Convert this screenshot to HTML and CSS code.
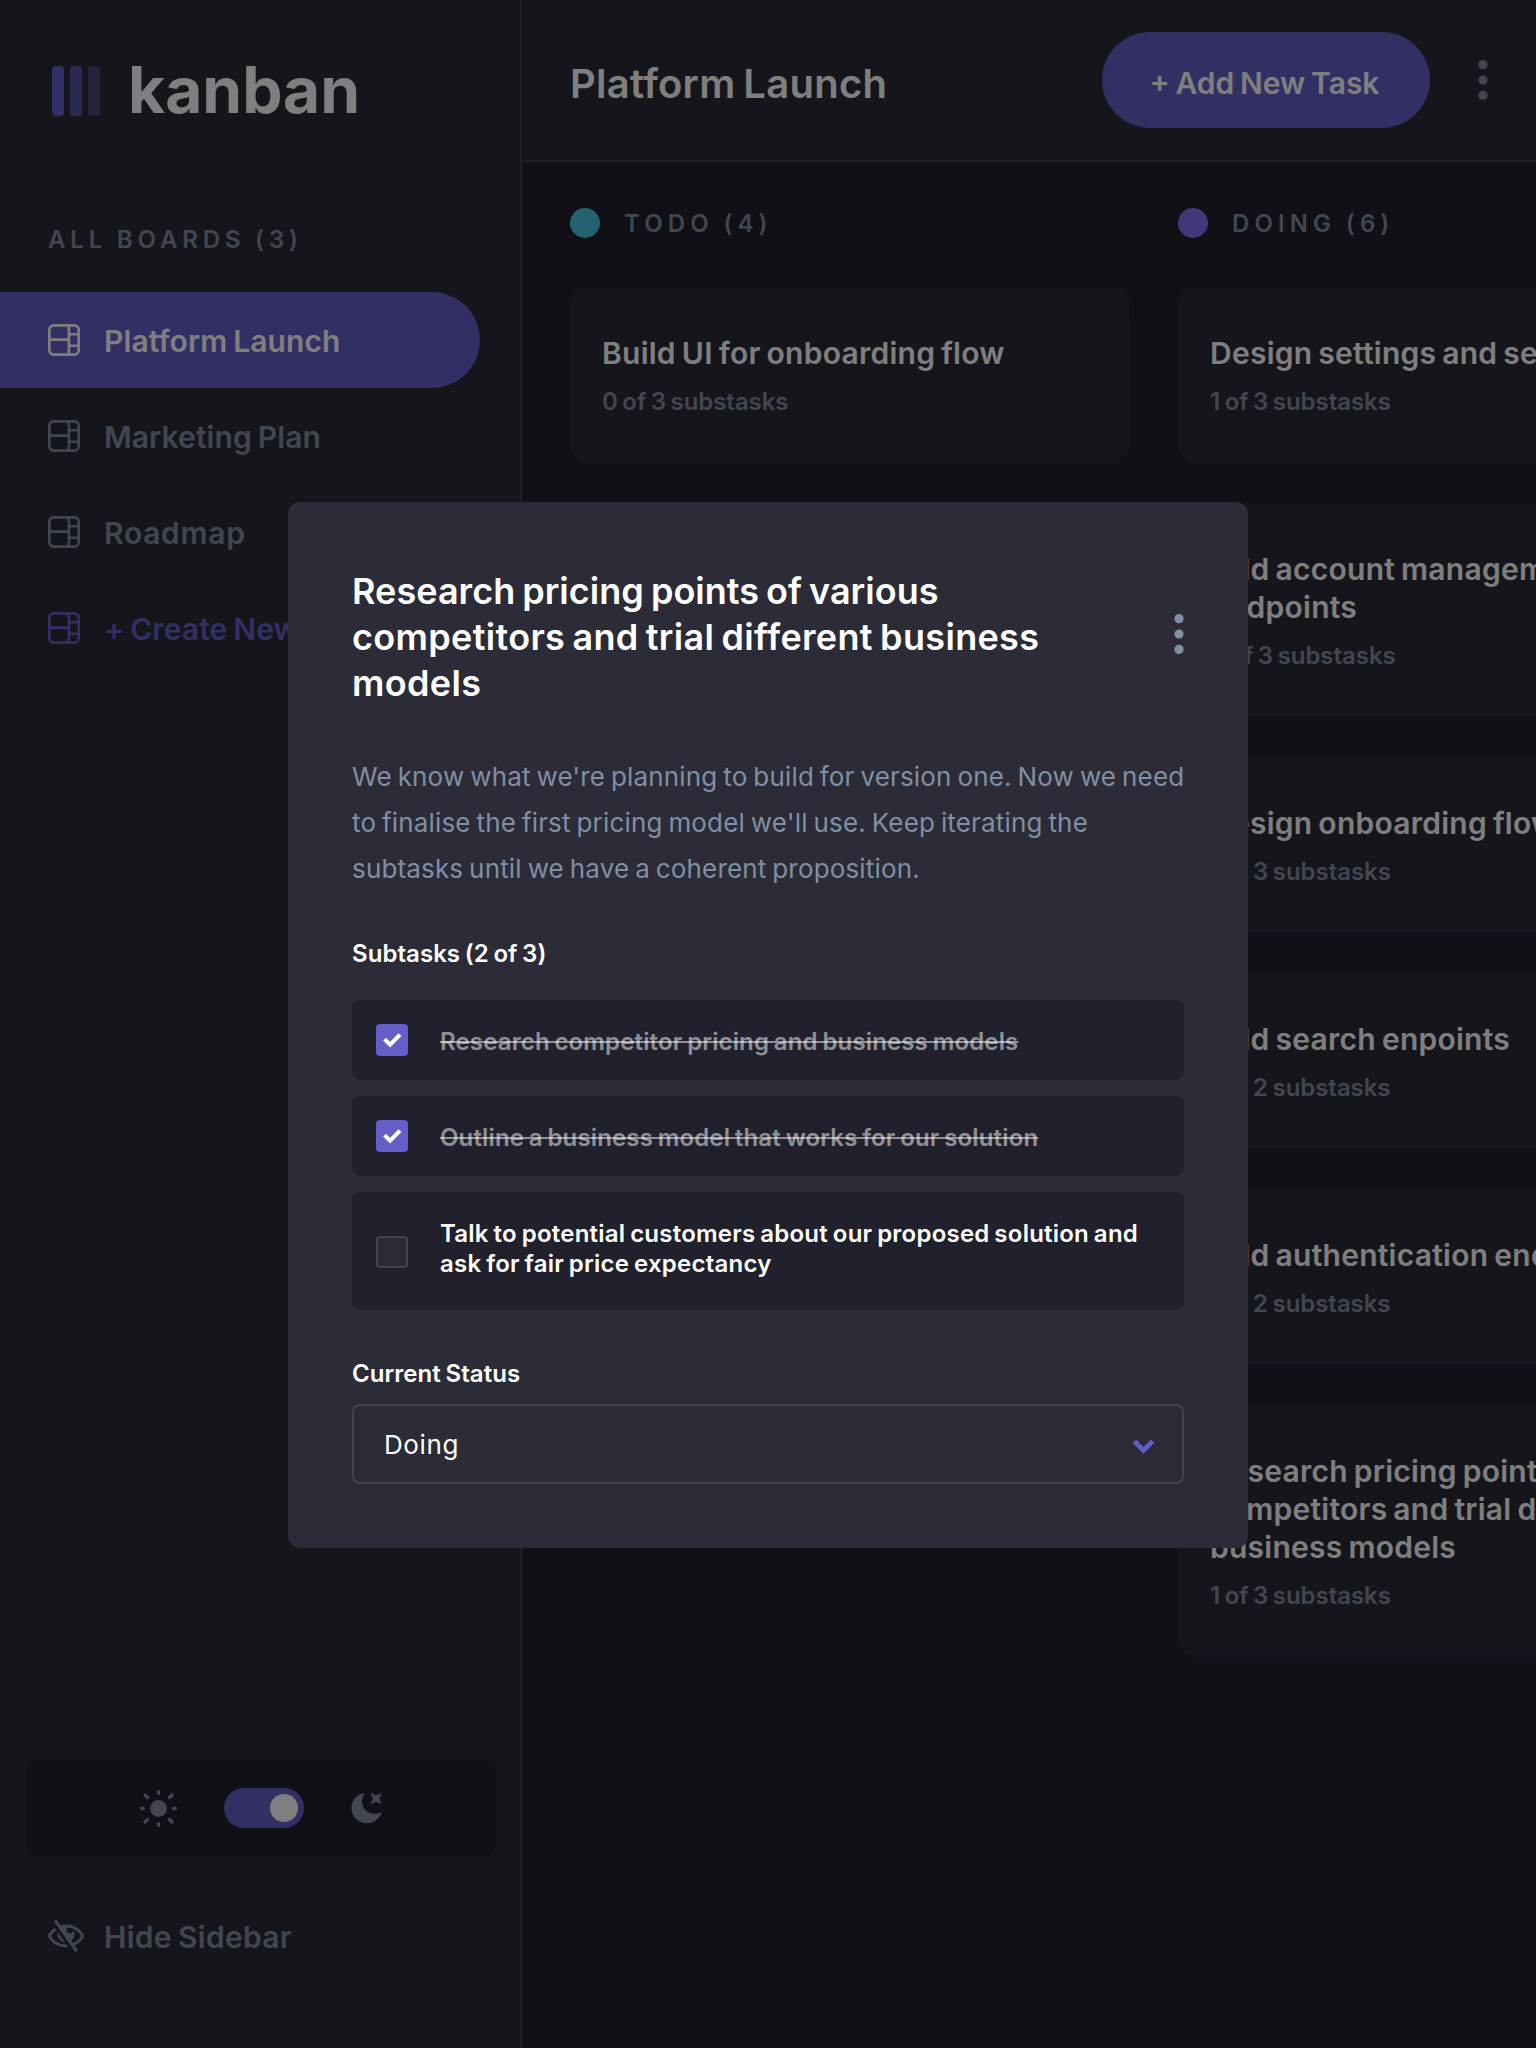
FILE: index.html
```html
<!DOCTYPE html>
<html lang="en">
<head>
<meta charset="utf-8">
<title>Kanban</title>
<link rel="stylesheet" href="styles.css">
</head>
<body>
<svg width="0" height="0" class="defs">
  <symbol id="board" viewBox="0 0 16 16"><path d="M0 2.889A2.889 2.889 0 0 1 2.889 0H13.11A2.889 2.889 0 0 1 16 2.889V13.11A2.888 2.888 0 0 1 13.111 16H2.89A2.889 2.889 0 0 1 0 13.111V2.89Zm1.333 5.555v4.667c0 .859.697 1.556 1.556 1.556h6.889V8.444H1.333Zm8.445-1.333V1.333h-6.89A1.556 1.556 0 0 0 1.334 2.89V7.11h8.445Zm4.889-1.333H11.11v4.444h3.556V5.778Zm0 5.778H11.11v3.11h2a1.556 1.556 0 0 0 1.556-1.555v-1.555Zm0-7.112V2.89a1.555 1.555 0 0 0-1.556-1.556h-2v3.111h3.556Z"/></symbol>
  <symbol id="dots" viewBox="0 0 5 20"><circle cx="2.5" cy="2.308" r="2.308"/><circle cx="2.5" cy="10" r="2.308"/><circle cx="2.5" cy="17.692" r="2.308"/></symbol>
  <symbol id="check" viewBox="0 0 10 8"><path d="m1.276 3.066 2.756 2.756 5-5" fill="none" stroke="#fff" stroke-width="2"/></symbol>
</svg>
<div class="app">
  <aside class="sidebar">
    <div class="logo"><i></i><i></i><i></i><b>kanban</b></div>
    <h2 class="eyebrow"><span>ALL BOARDS (3)</span></h2>
    <nav>
      <a class="item active"><svg class="i16"><use href="#board"/></svg><span>Platform Launch</span></a>
      <a class="item"><svg class="i16"><use href="#board"/></svg><span>Marketing Plan</span></a>
      <a class="item roadmap"><svg class="i16"><use href="#board"/></svg><span>Roadmap</span></a>
      <a class="item create"><svg class="i16"><use href="#board"/></svg><span>+ Create New Board</span></a>
    </nav>
    <div class="theme">
      <svg class="sun" viewBox="0 0 18.334 18.334"><path d="M9.167 15.833a.833.833 0 0 1 .833.834v.833a.833.833 0 0 1-1.667 0v-.833a.833.833 0 0 1 .834-.834ZM3.75 13.75a.833.833 0 0 1 .59 1.422l-1.25 1.25a.833.833 0 0 1-1.18-1.178l1.25-1.25a.833.833 0 0 1 .59-.244Zm10.833 0c.221 0 .433.088.59.244l1.25 1.25a.833.833 0 0 1-1.179 1.178l-1.25-1.25a.833.833 0 0 1 .59-1.422ZM9.167 5a4.167 4.167 0 1 1 0 8.334 4.167 4.167 0 0 1 0-8.334Zm-7.5 3.333a.833.833 0 0 1 0 1.667H.833a.833.833 0 1 1 0-1.667h.834Zm15.833 0a.833.833 0 0 1 0 1.667h-.833a.833.833 0 0 1 0-1.667h.833Zm-1.667-6.666a.833.833 0 0 1 .59 1.422l-1.25 1.25a.833.833 0 1 1-1.179-1.178l1.25-1.25a.833.833 0 0 1 .59-.244Zm-13.333 0c.221 0 .433.088.59.244l1.25 1.25a.833.833 0 0 1-1.18 1.178L1.91 3.09a.833.833 0 0 1 .59-1.422ZM9.167 0A.833.833 0 0 1 10 .833v.834a.833.833 0 1 1-1.667 0V.833A.833.833 0 0 1 9.167 0Z"/></svg>
      <div class="toggle"></div>
      <svg class="moon" viewBox="0 0 16 16"><path d="M6.474.682c.434-.11.718.406.481.78A6.067 6.067 0 0 0 6.01 4.72c0 3.418 2.827 6.187 6.314 6.187.89.002 1.77-.182 2.584-.54.408-.18.894.165.724.57-1.16 2.775-3.944 4.73-7.194 4.73-4.292 0-7.771-3.41-7.771-7.615 0-3.541 2.466-6.518 5.807-7.37Zm8.433.07c.442-.294.969.232.674.674l-.525.787a1.943 1.943 0 0 0 0 2.157l.525.788c.295.441-.232.968-.674.673l-.787-.525a1.943 1.943 0 0 0-2.157 0l-.786.525c-.442.295-.97-.232-.675-.673l.525-.788a1.943 1.943 0 0 0 0-2.157l-.525-.787c-.295-.442.232-.968.674-.673l.787.525a1.943 1.943 0 0 0 2.157 0Z"/></svg>
    </div>
    <a class="item hide"><svg class="eye" viewBox="0 0 18 16"><path d="M8.522 11.223a4.252 4.252 0 0 1-3.654-5.22l3.654 5.22ZM9 12.25A8.685 8.685 0 0 1 1.5 8a8.612 8.612 0 0 1 2.76-2.864l-.86-1.23A10.112 10.112 0 0 0 .208 7.238a1.5 1.5 0 0 0 0 1.524A10.187 10.187 0 0 0 9 13.75c.414 0 .828-.025 1.239-.074l-1-1.43A8.88 8.88 0 0 1 9 12.25Zm8.792-3.488a10.14 10.14 0 0 1-4.486 4.046l1.504 2.148a.375.375 0 0 1-.092.523l-.648.453a.375.375 0 0 1-.523-.092L3.19 1.044A.375.375 0 0 1 3.282.52L3.93.068a.375.375 0 0 1 .523.092l1.735 2.479A9.676 9.676 0 0 1 9 2.25a10.187 10.187 0 0 1 8.792 4.988 1.5 1.5 0 0 1 0 1.524ZM16.5 8a8.674 8.674 0 0 0-6.755-4.219A1.75 1.75 0 1 0 12.75 5v-.001a4.25 4.25 0 0 1-1.154 5.366l.834 1.192A8.641 8.641 0 0 0 16.5 8Z"/></svg><span>Hide Sidebar</span></a>
  </aside>
  <div class="main">
    <header class="topbar">
      <h1>Platform Launch</h1>
      <button class="add">+ Add New Task</button>
      <svg class="dots"><use href="#dots"/></svg>
    </header>
    <main class="columns">
      <section class="column">
        <h3 class="eyebrow"><i class="dot todo"></i><span>TODO (4)</span></h3>
        <article class="card"><h4>Build UI for onboarding flow</h4><p>0 of 3 substasks</p></article>
      </section>
      <section class="column">
        <h3 class="eyebrow"><i class="dot doing"></i><span>DOING (6)</span></h3>
        <article class="card"><h4>Design settings and search pages</h4><p>1 of 3 substasks</p></article>
        <article class="card"><h4>Add account management<br>endpoints</h4><p>2 of 3 substasks</p></article>
        <article class="card"><h4>Design onboarding flow</h4><p>1 of 3 substasks</p></article>
        <article class="card"><h4>Add search enpoints</h4><p>1 of 2 substasks</p></article>
        <article class="card"><h4>Add authentication endpoints</h4><p>1 of 2 substasks</p></article>
        <article class="card"><h4>Research pricing points of various<br>competitors and trial different<br>business models</h4><p>1 of 3 substasks</p></article>
      </section>
    </main>
  </div>
</div>
<div class="overlay">
  <div class="modal">
    <div class="modal-head">
      <h2>Research pricing points of various<br><span class="wide">competitors and trial different business<br>models</span></h2>
      <svg class="dots"><use href="#dots"/></svg>
    </div>
    <p class="desc">We know what we're planning to build for version one. Now we need<br>to finalise the first pricing model we'll use. Keep iterating the<br>subtasks until we have a coherent proposition.</p>
    <h5 class="label">Subtasks (2 of 3)</h5>
    <ul class="subtasks">
      <li class="done"><i class="box"><svg><use href="#check"/></svg></i><div>Research competitor pricing and business models</div></li>
      <li class="done"><i class="box"><svg><use href="#check"/></svg></i><div>Outline a business model that works for our solution</div></li>
      <li class="two"><i class="box"></i><div>Talk to potential customers about our proposed solution and<br>ask for fair price expectancy</div></li>
    </ul>
    <h5 class="label">Current Status</h5>
    <div class="select"><span>Doing</span><svg viewBox="0 0 10 7"><path d="m1 1 4 4 4-4"/></svg></div>
  </div>
</div>
</body>
</html>
```
FILE: styles.css
```css
* { box-sizing: border-box; margin: 0; padding: 0; }
body {
  width: 1536px; height: 2048px; overflow: hidden; position: relative;
  background: #20212c; color: #fff;
  font-family: Inter, "Open Sans", sans-serif; font-weight: 600;
}
h1, h2, h3, h4, h5, button { font: inherit; font-weight: 600; }
h1, h2, h3, h4, h5, p, li, a, button { white-space: nowrap; word-spacing: -.06em; }
i { display: block; font-style: normal; }
svg { display: block; fill: currentColor; flex: none; }
.defs { position: absolute; }
.app { display: flex; width: 1536px; height: 2048px; overflow: hidden; }

.sidebar {
  display: flex; flex-direction: column; flex: none; width: 522px;
  padding: 66px 0 64px; background: #2b2c37; border-right: 2px solid #3e3f4e; color: #828fa3;
}
.logo { display: flex; gap: 6px; height: 50px; padding-left: 52px; line-height: 48px; }
.logo i { width: 12px; border-radius: 4px; background: #635fc7; }
.logo i:nth-child(2) { opacity: .75; }
.logo i:nth-child(3) { opacity: .5; }
.logo b { margin-left: 22px; font-size: 64px; font-weight: 700; color: #fff; }
.eyebrow { font-size: 24px; line-height: 30px; letter-spacing: 4.9px; color: #828fa3; }
.sidebar .eyebrow { margin: 109px 0 37px 48px; }
.item { display: flex; align-items: center; gap: 24px; height: 96px; padding-left: 48px; font-size: 30px; line-height: 38px; letter-spacing: .1px; }
.item span { padding-top: 2px; }
.active { width: 480px; border-radius: 0 48px 48px 0; background: #635fc7; color: #fff; }
.roadmap { letter-spacing: .7px; }
.create { color: #635fc7; }
.i16 { width: 32px; height: 32px; }
.theme {
  display: flex; align-items: center; justify-content: center; gap: 47px;
  height: 96px; margin: auto 24px 32px 26px; border-radius: 12px; background: #20212c;
}
.sun { width: 37px; height: 37px; }
.moon { width: 32px; height: 32px; margin-left: -1px; }
.toggle { display: flex; justify-content: flex-end; width: 80px; height: 40px; padding: 6px; border-radius: 20px; background: #635fc7; }
.toggle::after { content: ""; width: 28px; height: 28px; border-radius: 50%; background: #fff; }
.eye { width: 36px; height: 32px; }
.hide { gap: 20px; letter-spacing: .3px; }

.main { flex: 1; min-width: 0; }
.topbar {
  display: flex; align-items: center; height: 162px; padding: 0 48px;
  background: #2b2c37; border-bottom: 2px solid #3e3f4e;
}
.topbar h1 { flex: 1; padding-top: 7px; font-size: 40px; line-height: 50px; letter-spacing: .25px; }
.add { width: 328px; height: 96px; padding: 5px 3px 0 0; border: 0; border-radius: 48px; background: #635fc7; color: #fff; font-size: 30px; }
.dots { width: 10px; height: 40px; color: #828fa3; }
.topbar .dots { margin-left: 48px; }
.columns { display: flex; gap: 48px; padding: 46px 48px; }
.column { display: flex; flex-direction: column; flex: none; gap: 40px; width: 560px; }
.column .eyebrow { display: flex; gap: 24px; margin-bottom: 8px; letter-spacing: 5.1px; }
.column .eyebrow span { height: 30px; padding-top: 1px; }
.dot { width: 30px; height: 30px; border-radius: 50%; }
.todo { background: #49c4e5; }
.doing { background: #8471f2; }
.card { padding: 48px 32px 45px; border-radius: 16px; background: #2b2c37; box-shadow: 0 8px 12px rgba(54, 78, 126, .1); }
.card h4 { font-size: 30px; line-height: 38px; letter-spacing: .25px; }
.card p { margin-top: 15px; font-size: 24px; line-height: 30px; letter-spacing: -.05px; color: #828fa3; }

.overlay { position: absolute; inset: 0; display: grid; place-items: center; padding-top: 2px; background: rgba(0, 0, 0, .5); }
.modal { width: 960px; padding: 64px; border-radius: 12px; background: #2b2c37; }
.modal-head { display: flex; align-items: center; justify-content: space-between; height: 136px; }
.modal-head h2 { padding-top: 6px; font-size: 36px; line-height: 46px; letter-spacing: .04px; }
.modal-head .wide { letter-spacing: .33px; }
.desc { margin: 52px 0 47px; font-size: 26px; font-weight: 400; line-height: 46px; letter-spacing: .16px; word-spacing: -1.6px; color: #828fa3; }
.label { font-size: 24px; line-height: 30px; letter-spacing: .05px; }
.subtasks { display: grid; gap: 16px; margin: 31px 0 49px; list-style: none; }
.subtasks li { display: flex; align-items: center; gap: 32px; height: 80px; padding: 2px 24px 0; border-radius: 8px; background: #20212c; font-size: 24px; line-height: 30px; letter-spacing: .23px; }
.subtasks .done { letter-spacing: .14px; }
.subtasks .two { height: 118px; }
.two div { margin-bottom: 6px; }
.done div { padding-top: 1px; color: rgba(255, 255, 255, .5); text-decoration: line-through; text-decoration-thickness: 1.5px; }
.box { display: grid; place-items: center; width: 32px; height: 32px; border-radius: 4px; background: #2b2c37; border: 2px solid rgba(130, 143, 163, .25); }
.done .box { margin-top: -2px; padding-top: 2px; background: #635fc7; border: 0; }
.box svg { width: 20px; height: 16px; }
.select { display: flex; align-items: center; justify-content: space-between; height: 80px; margin-top: 15px; padding: 0 27px 0 30px; border: 2px solid rgba(130, 143, 163, .25); border-radius: 8px; font-size: 26px; font-weight: 400; letter-spacing: .6px; }
.select svg { width: 23px; height: 16px; margin-top: 6px; fill: none; stroke: #635fc7; stroke-width: 2.1; }
```
